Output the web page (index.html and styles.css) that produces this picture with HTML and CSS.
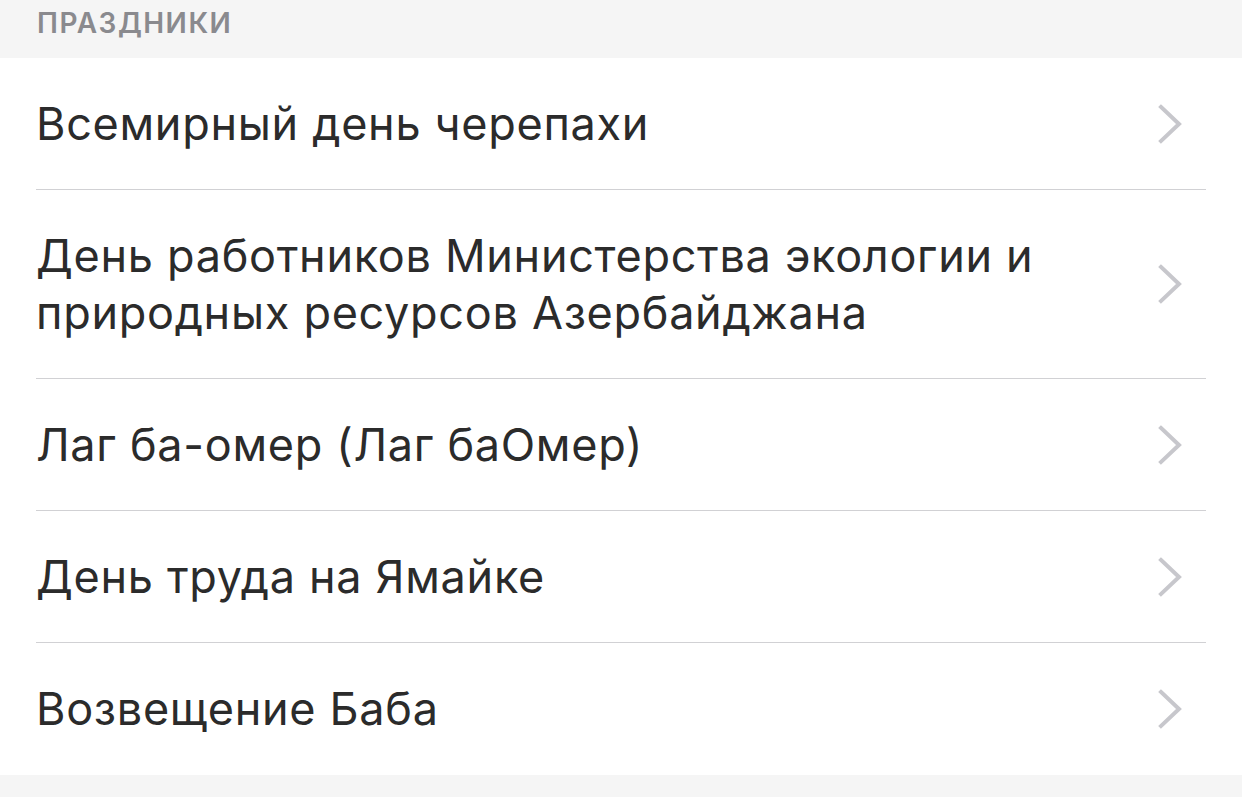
FILE: index.html
```html
<!DOCTYPE html>
<html lang="ru">
<head>
<meta charset="utf-8">
<link rel="stylesheet" href="styles.css">
</head>
<body>
<div class="section-header">ПРАЗДНИКИ</div>
<ul class="list">
  <li class="row"><span class="label">Всемирный день черепахи</span><svg class="chev" viewBox="0 0 26 40" width="26" height="40"><path d="M3 3 L21 20 L3 37" /></svg></li>
  <li class="row"><span class="label">День работников Министерства экологии и природных ресурсов Азербайджана</span><svg class="chev" viewBox="0 0 26 40" width="26" height="40"><path d="M3 3 L21 20 L3 37" /></svg></li>
  <li class="row"><span class="label">Лаг ба-омер (Лаг баОмер)</span><svg class="chev" viewBox="0 0 26 40" width="26" height="40"><path d="M3 3 L21 20 L3 37" /></svg></li>
  <li class="row"><span class="label">День труда на Ямайке</span><svg class="chev" viewBox="0 0 26 40" width="26" height="40"><path d="M3 3 L21 20 L3 37" /></svg></li>
  <li class="row"><span class="label">Возвещение Баба</span><svg class="chev" viewBox="0 0 26 40" width="26" height="40"><path d="M3 3 L21 20 L3 37" /></svg></li>
</ul>
<div class="footer"></div>
</body>
</html>
```
FILE: styles.css
```css
html, body {
  margin: 0;
  padding: 0;
  background: #f5f5f5;
  font-family: Inter, Roboto, "Noto Sans", sans-serif;
}
.section-header {
  height: 58px;
  box-sizing: border-box;
  padding: 8px 0 0 37px;
  font-size: 28px;
  font-weight: 600;
  letter-spacing: 1.5px;
  color: #8a8a8e;
  line-height: 30px;
}
.list {
  list-style: none;
  margin: 0;
  padding: 0 36px;
  background: #fff;
}
.row {
  display: flex;
  align-items: center;
  padding: 37px 0 37px 0;
  border-bottom: 1px solid #d1d1d4;
  color: #2b2b2b;
  font-size: 45px;
  letter-spacing: 0.7px;
  line-height: 57px;
}
.row:last-child {
  border-bottom: none;
  padding-bottom: 38px;
}
.label {
  flex: 1;
  padding-right: 60px;
}
.chev {
  flex: none;
  margin-right: 22px;
}
.chev path {
  fill: none;
  stroke: #c7c7cc;
  stroke-width: 4;
  stroke-linecap: square;
  stroke-linejoin: miter;
}
.footer {
  height: 21px;
}
```
